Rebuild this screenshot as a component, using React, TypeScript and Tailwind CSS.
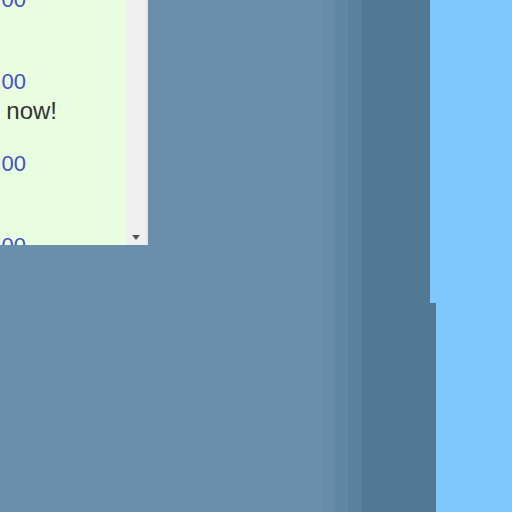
const items = [
  { price: '$10.00', note: '' },
  { price: '$20.00', note: 'Buy now!' },
  { price: '$30.00', note: '' },
  { price: '$40.00', note: '' },
]

function PriceList() {
  return (
    <div className="flex h-[245px] w-[148px] overflow-hidden bg-[#e9fde1]">
      <div className="flex w-[126px] flex-col overflow-hidden">
        <div className="-mt-[13px] flex flex-col">
          {items.map((item) => (
            <div key={item.price} className="flex h-[82px] flex-col">
              <div className="flex h-[26px] w-[26px] justify-end whitespace-nowrap text-[22px] leading-[26px] text-[#4650c2]">
                {item.price}
              </div>
              {item.note && (
                <div className="mt-[2px] flex h-[28px] w-[57px] justify-end whitespace-nowrap text-[24px] leading-[28px] text-[#333]">
                  {item.note}
                </div>
              )}
            </div>
          ))}
        </div>
      </div>
      <div className="flex w-[20px] flex-col justify-end bg-[#efefef] pb-[5px]">
        <div className="flex justify-center">
          <svg width="8" height="5" viewBox="0 0 8 5">
            <path d="M0 0 L8 0 L4 5 Z" fill="#555" />
          </svg>
        </div>
      </div>
      <div className="w-[2px] bg-[#e4e4e4]" />
    </div>
  )
}

export default function App() {
  return (
    <div
      className="flex h-[512px] w-[512px] overflow-hidden bg-[#6a8fab]"
      style={{ fontFamily: '"Liberation Sans", Arial, sans-serif' }}
    >
      <div className="w-[322px] shrink-0">
        <PriceList />
      </div>
      <div className="w-[12px] shrink-0 bg-[#668ca8]" />
      <div className="w-[14px] shrink-0 bg-[#6088a4]" />
      <div className="w-[14px] shrink-0 bg-[#5a819d]" />
      <div className="w-[68px] shrink-0 bg-[#517894]" />
      <div className="flex w-[6px] shrink-0 flex-col">
        <div className="h-[303px] bg-[#7fc8fe]" />
        <div className="flex-1 bg-[#517894]" />
      </div>
      <div className="flex-1 bg-[#7fc8fe]" />
    </div>
  )
}
